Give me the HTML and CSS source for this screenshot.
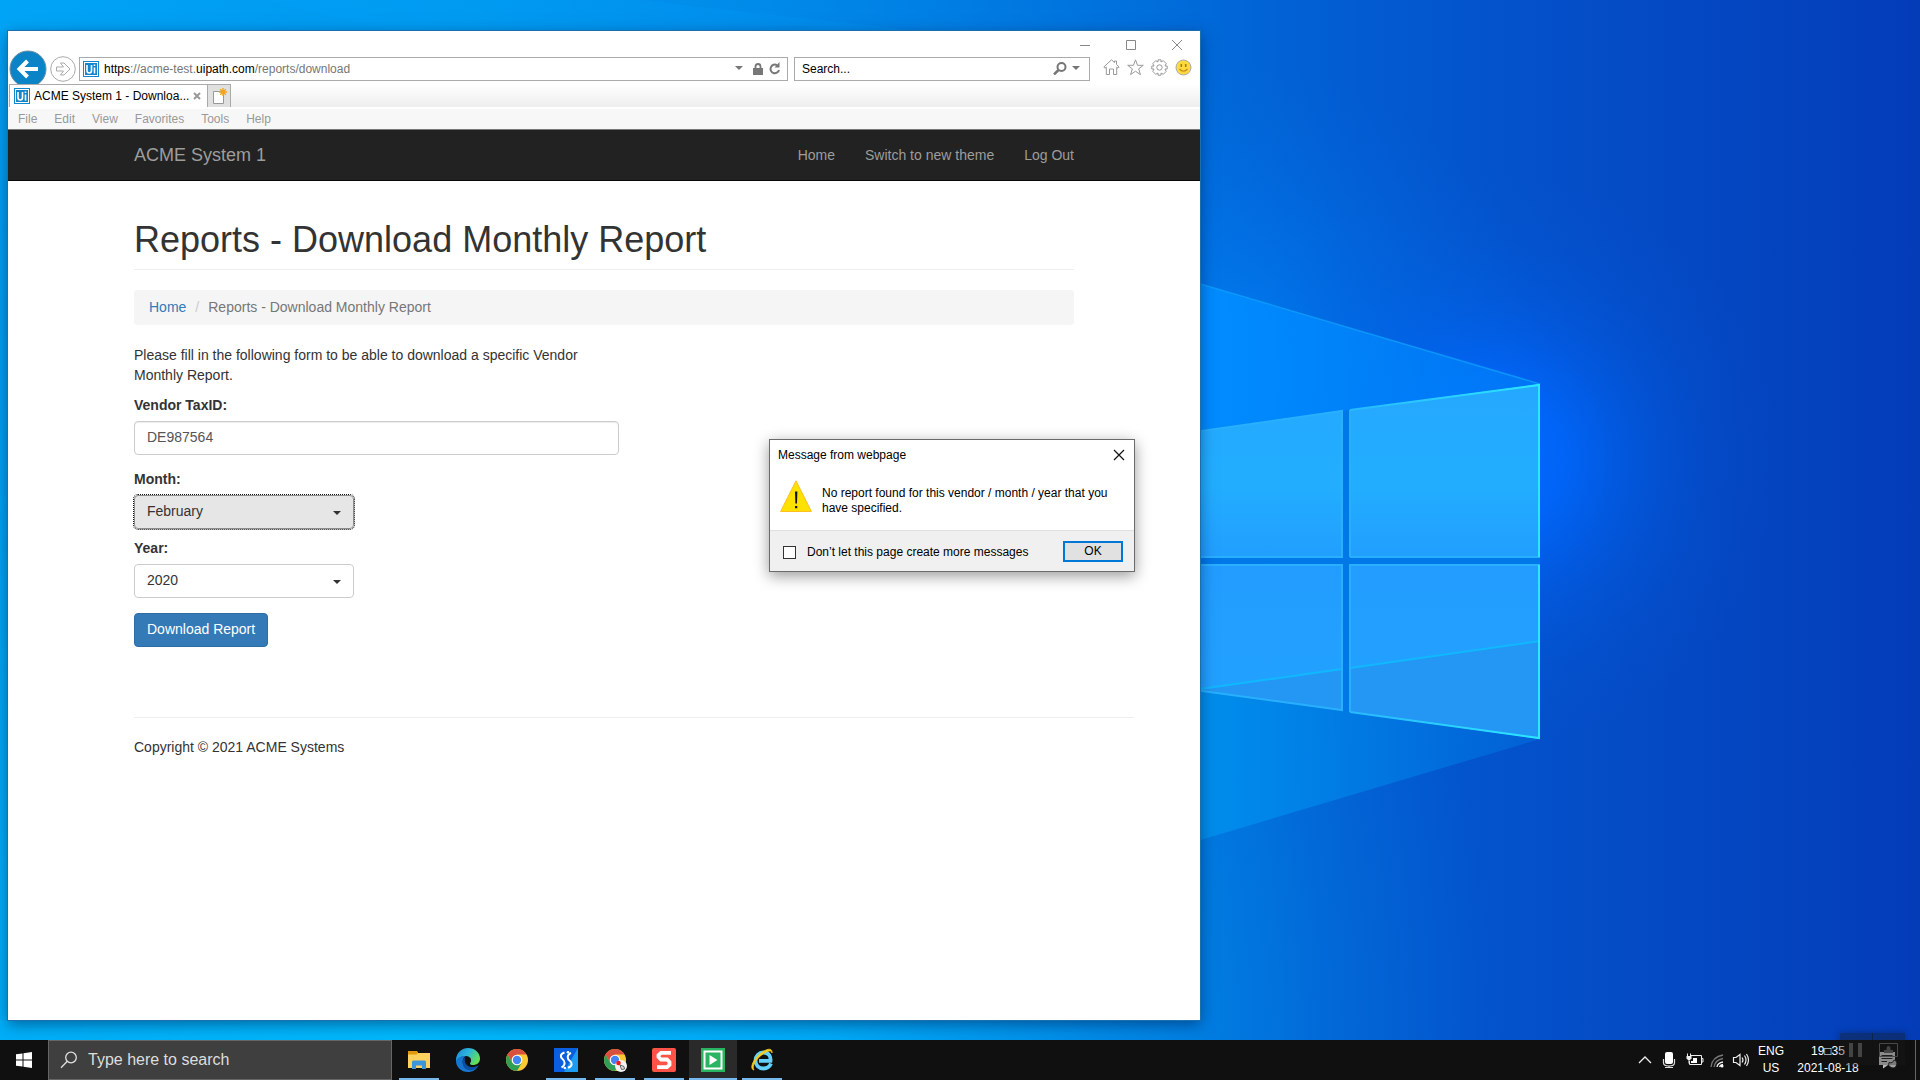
FILE: index.html
```html
<!DOCTYPE html>
<html lang="en">
<head>
<meta charset="utf-8">
<title>ACME System 1 - Download Monthly Report</title>
<link rel="stylesheet" href="styles.css">
</head>
<body>
<div class="desktop">
  <svg class="wallpaper" viewBox="0 0 1920 1080" preserveAspectRatio="none" aria-hidden="true">
    <defs>
      <linearGradient id="base" x1="0" x2="1920" y1="0" y2="0" gradientUnits="userSpaceOnUse">
        <stop offset="0" stop-color="#00a4f6"/>
        <stop offset=".25" stop-color="#009af0"/>
        <stop offset=".45" stop-color="#0084e6"/>
        <stop offset=".6" stop-color="#006edb"/>
        <stop offset=".7" stop-color="#025cd2"/>
        <stop offset=".82" stop-color="#044ec8"/>
        <stop offset="1" stop-color="#043cb8"/>
      </linearGradient>
      <radialGradient id="floor" cx="400" cy="1060" r="1100" gradientUnits="userSpaceOnUse">
        <stop offset="0" stop-color="#00b8fc"/>
        <stop offset=".4" stop-color="#00b0f8" stop-opacity=".8"/>
        <stop offset=".72" stop-color="#0098ec" stop-opacity=".45"/>
        <stop offset="1" stop-color="#0080e0" stop-opacity="0"/>
      </radialGradient>
      <radialGradient id="glow" cx="1490" cy="460" r="290" gradientUnits="userSpaceOnUse">
        <stop offset="0" stop-color="#006cff"/>
        <stop offset=".25" stop-color="#0068ff" stop-opacity=".85"/>
        <stop offset=".5" stop-color="#0064f4" stop-opacity=".4"/>
        <stop offset=".75" stop-color="#0060e8" stop-opacity=".12"/>
        <stop offset="1" stop-color="#0060e0" stop-opacity="0"/>
      </radialGradient>
      <radialGradient id="sheen" cx="1230" cy="380" r="320" gradientUnits="userSpaceOnUse">
        <stop offset="0" stop-color="#0088ff" stop-opacity=".7"/>
        <stop offset=".5" stop-color="#0080f8" stop-opacity=".3"/>
        <stop offset="1" stop-color="#0070e0" stop-opacity="0"/>
      </radialGradient>
      <linearGradient id="rayTop" x1="1200" x2="1540" y1="0" y2="0" gradientUnits="userSpaceOnUse">
        <stop offset="0" stop-color="#008cff"/>
        <stop offset="1" stop-color="#0080f8" stop-opacity=".6"/>
      </linearGradient>
      <linearGradient id="rayBottom" x1="1200" x2="1540" y1="0" y2="0" gradientUnits="userSpaceOnUse">
        <stop offset="0" stop-color="#008eec"/>
        <stop offset="1" stop-color="#0070e0" stop-opacity=".5"/>
      </linearGradient>
      <linearGradient id="pane" x1="0" x2="0" y1="384" y2="740" gradientUnits="userSpaceOnUse">
        <stop offset="0" stop-color="#25a8ff"/>
        <stop offset=".28" stop-color="#22aeff"/>
        <stop offset=".5" stop-color="#229dff"/>
        <stop offset="1" stop-color="#22a2ff"/>
      </linearGradient>
      <linearGradient id="edge" x1="1350" x2="1540" y1="0" y2="0" gradientUnits="userSpaceOnUse">
        <stop offset="0" stop-color="#28b8ff"/>
        <stop offset="1" stop-color="#2be8ff"/>
      </linearGradient>
    </defs>
    <rect width="1920" height="1080" fill="url(#base)"/>
    <rect width="1920" height="1080" fill="url(#floor)"/>
    <path d="M270 0L420 40H1000L640 0z" fill="#00a8ff" opacity=".15"/>
    <rect width="1920" height="1080" fill="url(#sheen)"/>
    <rect width="1920" height="1080" fill="url(#glow)"/>
    <path d="M1180 278L1540 384V562H1180z" fill="url(#rayTop)"/>
    <path d="M1180 562H1540V739L1180 846z" fill="url(#rayBottom)"/>
    <path d="M1180 278L1540 384" stroke="#10a4ff" stroke-width="1.5" opacity=".7"/>
    <path d="M1180 433L1540 384V739L1180 688z" fill="#0078e8"/>
    <path d="M1180 434L1342 411V557H1180zM1350 410L1540 384V557H1350zM1180 565H1342V710L1180 688zM1350 565H1540V739L1350 712z" fill="url(#pane)"/>
    <path d="M1200 690L1342 670V710zM1350 668L1540 641V738L1350 712z" fill="#2496f4"/>
    <path d="M1200 689L1342 669M1350 668L1540 641" stroke="#10b8ff" stroke-width="2"/>
    <path d="M1180 434L1342 411V557H1180M1180 565H1342V710L1180 688M1350 557V410M1350 557H1540M1350 712V565H1540" fill="none" stroke="#28b0ff" stroke-width="2"/>
    <path d="M1350 410L1539 385V557M1539 565V738L1350 712" fill="none" stroke="url(#edge)" stroke-width="2"/>
  </svg>

  <main class="browser">
    <div class="caption">
      <button class="cap-btn" aria-label="Minimize"><svg width="12" height="12"><path d="M1 6.500H11" stroke="#888"/></svg></button>
      <button class="cap-btn" aria-label="Maximize"><svg width="12" height="12"><path d="M1.500 1.500H10.500V10.500H1.500z" fill="none" stroke="#888"/></svg></button>
      <button class="cap-btn" aria-label="Close"><svg width="12" height="12"><path d="M1 1L11 11M11 1L1 11" stroke="#888"/></svg></button>
    </div>
    <div class="toolbar">
      <button class="back" aria-label="Back"><svg width="38" height="38" viewBox="0 0 38 38"><circle cx="19" cy="19" r="18" fill="#0a84c6" stroke="#6d8fa3"/><path d="M29 19H12M18.500 11L10.500 19L18.500 27" fill="none" stroke="#fff" stroke-width="4"/></svg></button>
      <button class="forward" aria-label="Forward"><svg width="26" height="26" viewBox="0 0 26 26"><circle cx="13" cy="13" r="12.300" fill="#fff" stroke="#aaa"/><path d="M6.500 11H13.500L10.500 7H14L20 13L14 19H10.500L13.500 15H6.500z" fill="#fff" stroke="#aaa"/></svg></button>
      <div class="address">
        <svg class="fav" width="16" height="16" viewBox="0 0 16 16"><rect width="16" height="16" fill="#1486cc"/><rect x="1.500" y="1.500" width="13" height="13" fill="#1486cc" stroke="#fff"/><path d="M4 4V9.500Q4 12 6.250 12T8.500 9.500V4M11.500 6.500V12.500M11.500 3.500V5" fill="none" stroke="#fff" stroke-width="1.600"/></svg>
        <span class="url"><b>https</b>://acme-test.<b>uipath.com</b>/reports/download</span>
        <svg width="8" height="5"><path d="M0 0H8L4 4z" fill="#777"/></svg>
        <svg class="lock" width="10" height="12" viewBox="0 0 10 12"><path d="M0 5H10V12H0z" fill="#777"/><path d="M2.500 6V3.500Q2.500 1 5 1T7.500 3.500V6" fill="none" stroke="#777" stroke-width="1.800"/></svg>
        <svg width="12" height="13" viewBox="0 0 12 13"><path d="M8 3.200A4.300 4.300 0 1 0 10 8" fill="none" stroke="#777" stroke-width="2"/><path d="M10.500 0V5.500H5.500z" fill="#777"/></svg>
      </div>
      <div class="find">
        <input type="text" aria-label="Search" value="Search...">
        <svg width="14" height="13" viewBox="0 0 14 13"><circle cx="8.500" cy="5" r="4" fill="none" stroke="#777" stroke-width="2"/><path d="M5.500 8L1 12.500" stroke="#777" stroke-width="2.500"/></svg>
        <svg width="8" height="5"><path d="M0 0H8L4 4z" fill="#777"/></svg>
      </div>
      <div class="tools">
        <svg width="17" height="17" viewBox="0 0 17 17"><path d="M.8 8L8.500 .8L11.500 3.600V2H13.500V5.500L16.200 8L15 9.200L13.700 8.200V15.500H10.500V10H6.500V15.500H3.300V8.200L2 9.200z" fill="#fff" stroke="#999"/></svg>
        <svg width="17" height="17" viewBox="0 0 17 17"><path d="M8.500 .8L10.500 6.300H16.300L11.700 9.800L13.400 15.600L8.500 12.200L3.600 15.600L5.300 9.800L.7 6.300H6.500z" fill="#fff" stroke="#999"/></svg>
        <svg width="17" height="17" viewBox="0 0 17 17"><path d="M7 .8H10V3L12.300 1.700L15.200 4.600L14 7H16.200V10H14L15.200 12.400L12.300 15.300L10 14V16.200H7V14L4.700 15.300L1.800 12.400L3 10H.8V7H3L1.800 4.600L4.700 1.700L7 3z" fill="#fff" stroke="#999"/><circle cx="8.500" cy="8.500" r="2.700" fill="#fff" stroke="#999"/></svg>
        <svg width="17" height="17" viewBox="0 0 17 17"><circle cx="8.500" cy="8.500" r="7.500" fill="#ffda3d" stroke="#a9a9a9"/><path d="M6.300 5V8M10.700 5V8" stroke="#9b7f2a" stroke-width="1.600"/><path d="M4.500 10Q8.500 14.500 12.500 10" fill="none" stroke="#b98b1b" stroke-width="1.200"/></svg>
      </div>
    </div>
    <div class="tabs">
      <div class="tab">
        <svg class="fav" width="16" height="16" viewBox="0 0 16 16"><rect width="16" height="16" fill="#1486cc"/><rect x="1.500" y="1.500" width="13" height="13" fill="#1486cc" stroke="#fff"/><path d="M4 4V9.500Q4 12 6.250 12T8.500 9.500V4M11.500 6.500V12.500M11.500 3.500V5" fill="none" stroke="#fff" stroke-width="1.600"/></svg>
        <span class="tab-title">ACME System 1 - Downloa...</span>
        <svg width="8" height="8"><path d="M1 1L7 7M7 1L1 7" stroke="#999" stroke-width="2"/></svg>
      </div>
      <button class="newtab" aria-label="New tab"><svg width="15" height="16" viewBox="0 0 15 16"><path d="M1.500 3.500H11.500V15.500H1.500z" fill="#fff" stroke="#999"/><path d="M11 0V8M7 4H15M8.200 1.200L13.800 6.800M13.800 1.200L8.200 6.800" stroke="#f0a51e" stroke-width="1.400"/></svg></button>
    </div>
    <nav class="menu" aria-label="Menu bar">
      <span>File</span><span>Edit</span><span>View</span><span>Favorites</span><span>Tools</span><span>Help</span>
    </nav>
    <header class="navbar">
      <div class="container navrow">
        <a class="brand" href="#">ACME System 1</a>
        <a href="#">Home</a><a href="#">Switch to new theme</a><a href="#">Log Out</a>
      </div>
    </header>
    <div class="container page">
      <h1>Reports - Download Monthly Report</h1>
      <div class="crumbs"><a href="#">Home</a><span class="slash">/</span><span>Reports - Download Monthly Report</span></div>
      <form class="report">
        <p>Please fill in the following form to be able to download a specific Vendor Monthly Report.</p>
        <label for="tax">Vendor TaxID:</label>
        <input id="tax" class="field" type="text" value="DE987564">
        <label for="month">Month:</label>
        <div class="pick focused"><select id="month"><option>February</option></select></div>
        <label for="year">Year:</label>
        <div class="pick"><select id="year"><option>2020</option></select></div>
        <button class="submit" type="button">Download Report</button>
      </form>
      <footer>Copyright © 2021 ACME Systems</footer>
    </div>
  </main>

  <section class="dialog" role="dialog" aria-labelledby="dlg-title">
    <div class="dlg-head"><span id="dlg-title">Message from webpage</span>
      <button class="dlg-close" aria-label="Close"><svg width="12" height="12"><path d="M1 1L11 11M11 1L1 11" stroke="#111" stroke-width="1.200"/></svg></button>
    </div>
    <div class="dlg-body">
      <svg width="32" height="32" viewBox="0 0 32 32"><path d="M16 .8L31.400 31.500H.6z" fill="#ffe100" stroke="#ffbe22"/><path d="M15 11.500H17.400L17 23.500H15.400zM15 26H17.300V28.300H15z" fill="#111"/></svg>
      <p>No report found for this vendor / month / year that you have specified.</p>
    </div>
    <div class="dlg-foot">
      <label><input type="checkbox">Don’t let this page create more messages</label>
      <button class="ok">OK</button>
    </div>
  </section>

  <div class="taskbar">
    <button class="start" aria-label="Start"><svg width="16" height="16" viewBox="0 0 16 16"><path d="M0 2.300L6.500 1.400V7.500H0zM7.500 1.200L16 0V7.500H7.500zM0 8.500H6.500V14.600L0 13.700zM7.500 8.500H16V16L7.500 14.800z" fill="#fff"/></svg></button>
    <div class="tasksearch">
      <svg width="18" height="18" viewBox="0 0 18 18"><circle cx="11" cy="6.500" r="5.300" fill="none" stroke="#e0e0e0" stroke-width="1.300"/><path d="M7.300 10.300L1 16.800" stroke="#e0e0e0" stroke-width="1.300"/></svg>
      <input type="text" placeholder="Type here to search" aria-label="Type here to search">
    </div>
    <div class="apps">
      <button class="app open" aria-label="File Explorer"><svg width="24" height="24" viewBox="0 0 24 24"><path d="M1 3H10L11 5H23V20H1z" fill="#ffd25e"/><path d="M1 3H9.500L11 5L9.500 6.500H1z" fill="#e09a0c"/><path d="M5 21V14Q5 12.500 6.500 12.500H17.500Q19 12.500 19 14V21H15V17.500H9V21z" fill="#3c96dc"/></svg></button>
      <button class="app" aria-label="Edge"><svg width="24" height="24" viewBox="0 0 24 24"><defs><linearGradient id="e1" x1="0" x2="1" y1="0" y2=".5"><stop offset="0" stop-color="#1b86d8"/><stop offset=".5" stop-color="#2bb5dc"/><stop offset="1" stop-color="#62e05a"/></linearGradient></defs><path d="M0 11C1 4 6 0 12 0C19 0 24 5 24 10.500C24 15 20.500 17 17 17C14 17 13.500 15.500 14.500 14.500C16 12 14.500 8 10 8C5 8 1 11 0 14z" fill="url(#e1)"/><path d="M0 13C1 10 5 7.500 9.500 8C6 10 5.500 16 9.500 20C12 22.500 17 22 22.500 17.500C20 22 16.500 24 12 24C5 24 0 19 0 13z" fill="#1676cf"/><path d="M9.500 9C8 12 9 15.500 11.500 17.500C15 20 19 19 22.500 17.500C19 22.500 14 23.500 10 21C5.500 18 5.500 11 9.500 9z" fill="#0c4fa0"/></svg></button>
      <button class="app" aria-label="Chrome"><svg width="24" height="24" viewBox="0 0 24 24"><circle cx="12" cy="12" r="11" fill="#fcc934"/><path d="M2.500 6.500A11 11 0 0 1 21.500 6.500H12L7.200 14.700z" fill="#d9503f"/><path d="M2.500 6.500A11 11 0 0 0 12 23L16.800 14.800L12 17L7.200 14.700z" fill="#2f9e57"/><circle cx="12" cy="12" r="5.300" fill="#fff"/><circle cx="12" cy="12" r="4.200" fill="#4285f4"/></svg></button>
      <button class="app open" aria-label="Studio"><svg width="24" height="24" viewBox="0 0 24 24"><path d="M0 0H24V24H0z" fill="#0a5fe0"/><path d="M24 0V24H10z" fill="#1c9cf2"/><path d="M10.500 4.500C5.500 6 6.500 9.500 8.500 11C11 13 12 17 7.500 19.500M14 19.800C19 18 18 14.500 16 13C13 11 12.500 7 17 4.800" fill="none" stroke="#fff" stroke-width="2"/><circle cx="14" cy="4.300" r="1.300" fill="#fff"/><circle cx="10.800" cy="20" r="1.300" fill="#fff"/></svg></button>
      <button class="app open" aria-label="Chrome, second profile"><svg width="24" height="24" viewBox="0 0 24 24"><circle cx="12" cy="12" r="11" fill="#fcc934"/><path d="M2.500 6.500A11 11 0 0 1 21.500 6.500H12L7.200 14.700z" fill="#d9503f"/><path d="M2.500 6.500A11 11 0 0 0 12 23L16.800 14.800L12 17L7.200 14.700z" fill="#2f9e57"/><circle cx="12" cy="12" r="5.300" fill="#fff"/><circle cx="12" cy="12" r="4.200" fill="#4285f4"/><circle cx="18" cy="18" r="6" fill="#f3f3f3"/><circle cx="15.500" cy="15" r="2.300" fill="#f01818"/><path d="M17 17L18.500 21.500L21.500 21L21 18.500z" fill="#ddd" stroke="#444" stroke-width=".8"/></svg></button>
      <button class="app open" aria-label="Snagit"><svg width="24" height="24" viewBox="0 0 24 24"><rect width="24" height="24" rx="2" fill="#ff5347"/><path d="M19 4.800H9L6.500 7V9L9 11.500H15L17.500 14V17L15 19.200H5" fill="none" stroke="#fff" stroke-width="3.800"/></svg></button>
      <button class="app open active" aria-label="Recorder"><svg width="24" height="24" viewBox="0 0 24 24"><path d="M0 0H24V24H0z" fill="#28b463"/><path d="M3.500 3.500H20.500V20.500H3.500z" fill="none" stroke="#fff" stroke-width="2"/><path d="M8.500 7L16.500 12L8.500 17z" fill="#fff"/></svg></button>
      <button class="app open" aria-label="Internet Explorer"><svg width="24" height="24" viewBox="0 0 24 24"><path d="M21 15.500C19.500 19 17 20.500 13.500 20.500C8.500 20.500 5.500 17 5.500 12.500C5.500 8 9 4.500 13.500 4.500C18.500 4.500 21 8 20.500 12.800H9" fill="none" stroke="#62d0fa" stroke-width="3.800"/><path d="M4 22C-1 21 3 11 11 5C17 .5 22.500 -.5 22 5C21.500 1.800 18 2.500 13 6C5 11.500 1.500 19 4 22z" fill="#f6c91c" stroke="#f6c91c" stroke-width=".8"/></svg></button>
    </div>
    <div class="tray">
      <svg width="24" height="24" viewBox="0 0 24 24"><path d="M6 15L12 9L18 15" fill="none" stroke="#eee" stroke-width="1.300"/></svg>
      <svg width="24" height="24" viewBox="0 0 24 24"><rect x="8" y="4" width="8" height="12" rx="2" fill="#fff"/><path d="M6.500 11V15Q6.500 18 12 18T17.500 15V11M12 18V20M8 19.500H16" fill="none" stroke="#ddd" stroke-width="1.200"/></svg>
      <svg width="24" height="24" viewBox="0 0 24 24"><path d="M10 7.500H20.500V16.500H8.500V13M20.500 10.500H22V14H20.500" fill="none" stroke="#eee"/><path d="M12 10H16V15H10V13H12z" fill="#fff"/><path d="M5.500 8H10.500V10.500L9 12H7L5.500 10.500z" fill="#eee"/><path d="M6.500 5.500V8M9.500 5.500V8M8 12V15.500" stroke="#eee"/></svg>
      <svg width="24" height="24" viewBox="0 0 24 24"><path d="M6 19Q7 9 18 7M9 19Q10 12 18 10.500" fill="none" stroke="#777" stroke-width="1.300"/><path d="M12 19Q12.500 15 18 14M14.500 19Q15 17 18 16.500" fill="none" stroke="#eee" stroke-width="1.300"/><circle cx="17" cy="18" r="1.500" fill="#fff"/></svg>
      <svg width="24" height="24" viewBox="0 0 24 24"><path d="M4.500 9.500H7L11 6.500V17.500L7 14.500H4.500zM13 9.500Q15 12 13 14.500M15.500 7.500Q18.500 12 15.500 16.500M17.500 6Q21.500 12 17.500 18" fill="none" stroke="#eee" stroke-width="1.200"/></svg>
      <div class="lang"><span>ENG</span><span>US</span></div>
      <div class="clock"><span>19□35</span><span>2021-08-18</span></div>
      <svg class="notes" width="18" height="18" viewBox="0 0 18 18"><path d="M0 1H16V14H9L4 17.500V14H0z" fill="#d8d8d8"/><path d="M2.500 4.500H13.500M2.500 7.500H13.500M2.500 10.500H8" stroke="#222"/><path d="M10 11.500A4 4 0 1 0 15 9A4 4 0 0 1 10 11.500z" fill="#bbb" stroke="#222"/></svg>
      <span class="peek"></span>
    </div>
  </div>
  <div class="recbar">
    <svg width="65" height="32" viewBox="0 0 65 32"><path d="M9 10H13V24H9zM18 10H22V24H18z" fill="#444"/><path d="M32.500 0V32" stroke="#111" opacity=".4"/><path d="M39.500 10.500H57.500V23.500H39.500z" fill="none" stroke="#484848"/><path d="M48.500 13A2 2 0 0 1 50.500 15V17H53V20H44V17H46.500V15A2 2 0 0 1 48.500 13z" fill="#444"/></svg>
  </div>
</div>
</body>
</html>
```

FILE: styles.css
```css
* { box-sizing: border-box; }
body { margin: 0; font: 14px/20px "Liberation Sans", Arial, sans-serif; color: #333; }
a { color: #337ab7; text-decoration: none; }
button { font: inherit; padding: 0; border: 0; background: none; }
svg { display: block; flex: none; }

.desktop { position: relative; height: 100vh; overflow: hidden; display: flex; flex-direction: column; justify-content: flex-end; }
.wallpaper { position: absolute; inset: 0; width: 100%; height: 100%; }

.browser { position: absolute; left: 8px; top: 31px; right: 37.5%; bottom: 60px; display: flex; flex-direction: column; background: #fff; box-shadow: 0 0 0 1px #1a6fae, 0 4px 14px rgba(0, 20, 60, .5); }
.caption { display: flex; justify-content: flex-end; height: 25px; padding: 2px 0 0; }
.cap-btn { width: 46px; height: 24px; display: grid; place-items: center; }
.toolbar { display: flex; align-items: center; height: 25px; padding: 0 8px 0 1px; font-size: 12px; color: #777; }
.back { z-index: 1; }
.forward { margin: 0 3px; }
.address { flex: 1; display: flex; align-items: center; gap: 10px; height: 24px; padding: 0 6px 0 3px; border: 1px solid #aaa; }
.address .fav { margin-right: -5px; }
.address .lock { margin-right: -4px; }
.url { flex: 1; }
.url b { font-weight: normal; color: #000; }
.find { display: flex; align-items: center; gap: 5px; width: 296px; height: 24px; margin: 0 13px 0 6px; padding: 0 9px 0 7px; border: 1px solid #aaa; }
.find input { flex: 1; min-width: 0; padding: 0; border: 0; background: none; font: inherit; color: #000; outline: 0; }
.tools { display: flex; gap: 7px; margin-top: -2px; }
.tabs { position: relative; z-index: 2; display: flex; height: 25px; margin-top: 3px; padding-left: 1px; background: linear-gradient(#fff, #eee 23px, #fff 23px); }
.tab { display: flex; align-items: center; gap: 4px; width: 198px; height: 23px; padding: 0 6px 0 4px; border: 1px solid #aaa; border-width: 1px 0 0 1px; background: #fff; font-size: 12px; color: #000; white-space: nowrap; }
.tab-title { flex: 1; }
.newtab { display: grid; place-items: center; width: 24px; height: 23px; border: 1px solid #aaa; border-bottom: 0; background: #e0e0e0; }
.menu { display: flex; gap: 17px; height: 20px; padding-left: 10px; background: #f7f7f7; font-size: 12px; color: #999; }
.navbar { height: 52px; background: #222; border-top: 1px solid #777; border-bottom: 1px solid #080808; }
.container { width: 100%; max-width: 940px; margin: 0 auto; }
.navrow { display: flex; align-items: center; gap: 30px; height: 50px; }
.navrow a { color: #9d9d9d; }
.navrow .brand { flex: 1; font-size: 18px; }

.page { padding-top: 39px; }
h1 { margin: 0 0 20px; padding-bottom: 9px; border-bottom: 1px solid #eee; font-size: 36px; line-height: 40px; font-weight: normal; }
.crumbs { display: flex; height: 35px; padding: 7px 15px; margin-bottom: 20px; border-radius: 4px; background: #f5f5f5; color: #777; }
.slash { padding: 0 9px; color: #ccc; }
.report { width: 485px; display: flex; flex-direction: column; align-items: flex-start; }
.report p { margin: 0 0 10px; }
.report label { margin-bottom: 6px; font-weight: bold; }
.field { width: 100%; height: 34px; margin-bottom: 14px; padding: 5px 12px 7px; border: 1px solid #ccc; border-radius: 4px; box-shadow: inset 0 1px 1px rgba(0, 0, 0, .075); font: inherit; color: #555; }
.pick { position: relative; width: 220px; margin-bottom: 9px; }
.pick::after { content: ""; position: absolute; right: 13px; top: 16px; border: 4px solid transparent; border-top-color: #333; border-bottom: 0; }
.pick select { display: block; width: 100%; height: 34px; padding: 0 12px 2px; appearance: none; border: 1px solid #ccc; border-radius: 4px; background: #fff; font: inherit; color: #333; }
.pick.focused select { background: #e6e6e6; border-color: #8c8c8c; outline: 1px dotted #111; }
.submit { height: 34px; margin-top: 6px; padding: 0 12px 2px; border: 1px solid #2e6da4; border-radius: 4px; background: #337ab7; color: #fff; }
footer { width: 1000px; margin-top: 70px; padding-top: 19px; border-top: 1px solid #eee; }

.dialog { position: absolute; left: 769px; top: 439px; width: 366px; background: #fff; border: 1px solid #6b6b6b; box-shadow: 0 4px 14px rgba(0, 0, 0, .4); font-size: 12px; line-height: 15px; color: #000; }
.dlg-head { display: flex; justify-content: space-between; align-items: center; height: 30px; padding: 0 9px 0 8px; }
.dlg-body { display: flex; gap: 10px; height: 60px; padding: 10px; }
.dlg-body p { margin: 6px 0 0; }
.dlg-foot { display: flex; justify-content: space-between; align-items: center; height: 41px; padding: 0 11px 0 13px; border-top: 1px solid #dfdfdf; background: #f0f0f0; }
.dlg-foot label { display: flex; align-items: center; gap: 11px; padding-top: 2px; }
.dlg-foot input { appearance: none; width: 13px; height: 13px; margin: 0; border: 1px solid #333; background: #fff; }
.ok { width: 60px; height: 21px; border: 2px solid #0078d7; background: #e1e1e1; color: #000; }

.taskbar { position: relative; display: flex; height: 40px; background: #101010; color: #fff; }
.start { width: 48px; display: grid; place-items: center; }
.tasksearch { display: flex; align-items: center; gap: 10px; width: 344px; padding: 0 11px; border: 1px solid #666; background: #3f3f3f; }
.tasksearch input { flex: 1; padding: 0; border: 0; background: none; font: inherit; font-size: 16px; color: #ddd; }
.tasksearch input::placeholder { color: #ddd; }
.apps { display: flex; gap: 1px; flex: 1; padding-left: 3px; }
.app { position: relative; width: 48px; display: grid; place-items: center; }
.app.open::after { content: ""; position: absolute; left: 4px; right: 4px; bottom: 0; height: 2px; background: #76b9ed; }
.app.active { background: #2a2a2a; }
.app.active::after { left: 0; right: 0; }
.tray { display: flex; align-items: center; padding-right: 4px; font-size: 12px; line-height: 17px; }
.lang, .clock { display: flex; flex-direction: column; align-items: center; }
.lang { width: 36px; }
.clock { width: 78px; }
.notes { margin: 0 18px 0 12px; }
.peek { width: 1px; height: 40px; background: #666; }
.recbar { position: absolute; right: 15px; bottom: 15px; background: rgba(25, 25, 25, .4); box-shadow: 0 0 6px rgba(20, 20, 20, .4); }
```
